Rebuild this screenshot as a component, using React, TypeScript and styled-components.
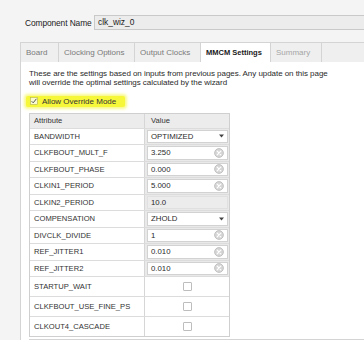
import React from 'react';
import styled, { createGlobalStyle } from 'styled-components';

const GlobalStyle = createGlobalStyle`
  html, body {
    margin: 0;
    padding: 0;
    background: #f4f4f4;
  }
  body {
    font-family: 'Liberation Sans', Arial, sans-serif;
    color: #333;
  }
`;

const Page = styled.div`
  width: 364px;
  height: 340px;
  overflow: hidden;
  background: #f4f4f4;
  display: flex;
  flex-direction: column;
`;

const NameRow = styled.div`
  display: flex;
  align-items: center;
  padding: 15px 0 0 25px;
  height: 15px;
`;

const NameLabel = styled.span`
  font-size: 8.4px;
  letter-spacing: -0.1px;
  color: #222;
  width: 69px;
`;

const NameInput = styled.div`
  flex: 1;
  height: 13px;
  border: 1px solid #c9c9c9;
  border-right: none;
  background: #ececec;
  font-size: 8.4px;
  line-height: 13px;
  padding-left: 3px;
  color: #222;
`;

const TabStrip = styled.div`
  display: flex;
  margin: 12px 0 0 20px;
  height: 19px;
  border-top: 1px solid #d4d4d4;
  border-left: 1px solid #d4d4d4;
  background: #efefef;
`;

const Tab = styled.div<{ $active?: boolean; $muted?: boolean; $w: number }>`
  width: ${p => p.$w}px;
  box-sizing: border-box;
  display: flex;
  align-items: center;
  padding-left: 5px;
  font-size: ${p => (p.$active ? '7.5px' : '8px')};
  font-weight: ${p => (p.$active ? 700 : 400)};
  color: ${p => (p.$active ? '#1a1a1a' : p.$muted ? '#a6a6a6' : '#7a7a7a')};
  background: ${p => (p.$active ? '#ffffff' : 'transparent')};
  border-right: 1px solid #d4d4d4;
`;

const Panel = styled.div`
  flex: 1;
  margin-left: 20px;
  background: #ffffff;
  border-left: 1px solid #d4d4d4;
  padding: 7px 0 0 8px;
  display: flex;
  flex-direction: column;
`;

const Intro = styled.p`
  margin: 0;
  font-size: 8px;
  line-height: 9.5px;
  color: #2a2a2a;
  letter-spacing: -0.05px;
  white-space: nowrap;
`;

const Highlight = styled.div`
  margin: 8px 0 0 -3px;
  width: 95px;
  height: 11px;
  display: flex;
  align-items: center;
  gap: 4px;
  padding-left: 4px;
  background: #f7f73a;
  box-shadow: 0 0 3px 2px #f9f98a;
  border-radius: 2px;
  font-size: 8px;
  color: #333;
`;

const Table = styled.div`
  margin-top: 6px;
  width: 199px;
  border: 1px solid #cfcfcf;
  display: flex;
  flex-direction: column;
`;

const Row = styled.div<{ $h: number; $head?: boolean }>`
  display: grid;
  grid-template-columns: 115px 1fr;
  height: ${p => p.$h}px;
  background: ${p => (p.$head ? '#ececec' : '#ffffff')};
  border-top: 1px solid #dcdcdc;
  box-sizing: border-box;
  &:first-child {
    border-top: none;
  }
`;

const NameCell = styled.div`
  display: flex;
  align-items: center;
  padding-left: 4px;
  font-size: 7.6px;
  color: #333;
  border-right: 1px solid #d6d6d6;
`;

const ValueCell = styled.div`
  display: flex;
  align-items: stretch;
  padding: 1px 1px 1px 2px;
  background: #e9e9e9;
  font-size: 7.8px;
`;

const HeadValue = styled.div`
  display: flex;
  align-items: center;
  padding-left: 6px;
  font-size: 7.6px;
  color: #333;
`;

const Field = styled.div<{ $disabled?: boolean }>`
  flex: 1;
  display: flex;
  align-items: center;
  justify-content: space-between;
  padding: 0 3px 0 3px;
  background: ${p => (p.$disabled ? '#ececec' : '#ffffff')};
  border: 1px solid ${p => (p.$disabled ? '#e0e0e0' : '#d2d2d2')};
  color: #2a2a2a;
`;

const BoolCell = styled.div`
  display: flex;
  align-items: center;
  justify-content: center;
`;

const SmallBox = styled.div`
  width: 7px;
  height: 7px;
  border: 1px solid #bdbdbd;
  border-radius: 1px;
  background: #fff;
`;

const Rule = styled.div`
  margin-top: 2px;
  height: 1px;
  background: #d4d4d4;
`;

const ClearIcon = () => (
  <svg width="10" height="10" viewBox="0 0 10 10">
    <circle cx="5" cy="5" r="4.4" fill="#d6d6d6" stroke="#b8b8b8" strokeWidth="0.8" />
    <path d="M3.2 3.2 L6.8 6.8 M6.8 3.2 L3.2 6.8" stroke="#ffffff" strokeWidth="1.2" strokeLinecap="round" />
  </svg>
);

const DropArrow = () => (
  <svg width="5" height="4" viewBox="0 0 5 4">
    <path d="M0 0.5 L5 0.5 L2.5 3.5 Z" fill="#444" />
  </svg>
);

const CheckMark = () => (
  <svg width="8" height="8" viewBox="0 0 8 8">
    <rect x="0.5" y="0.5" width="7" height="7" fill="#fafad0" stroke="#b5b54a" strokeWidth="0.6" />
    <path d="M1.6 4.2 L3.2 5.8 L6.4 1.8" fill="none" stroke="#555" strokeWidth="1" />
  </svg>
);

type Kind = 'text' | 'select' | 'disabled' | 'bool';

const rows: { name: string; value: string; kind: Kind }[] = [
  { name: 'BANDWIDTH', value: 'OPTIMIZED', kind: 'select' },
  { name: 'CLKFBOUT_MULT_F', value: '3.250', kind: 'text' },
  { name: 'CLKFBOUT_PHASE', value: '0.000', kind: 'text' },
  { name: 'CLKIN1_PERIOD', value: '5.000', kind: 'text' },
  { name: 'CLKIN2_PERIOD', value: '10.0', kind: 'disabled' },
  { name: 'COMPENSATION', value: 'ZHOLD', kind: 'select' },
  { name: 'DIVCLK_DIVIDE', value: '1', kind: 'text' },
  { name: 'REF_JITTER1', value: '0.010', kind: 'text' },
  { name: 'REF_JITTER2', value: '0.010', kind: 'text' },
  { name: 'STARTUP_WAIT', value: '', kind: 'bool' },
  { name: 'CLKFBOUT_USE_FINE_PS', value: '', kind: 'bool' },
  { name: 'CLKOUT4_CASCADE', value: '', kind: 'bool' },
];

const tabs = [
  { label: 'Board', w: 38 },
  { label: 'Clocking Options', w: 76 },
  { label: 'Output Clocks', w: 66 },
  { label: 'MMCM Settings', w: 70, active: true },
  { label: 'Summary', w: 51, muted: true },
];

export default function App() {
  return (
    <Page>
      <GlobalStyle />
      <NameRow>
        <NameLabel>Component Name</NameLabel>
        <NameInput>clk_wiz_0</NameInput>
      </NameRow>
      <TabStrip>
        {tabs.map(t => (
          <Tab key={t.label} $w={t.w} $active={t.active} $muted={t.muted}>
            {t.label}
          </Tab>
        ))}
      </TabStrip>
      <Panel>
        <Intro>
          These are the settings based on inputs from previous pages. Any update on this page
          <br />
          will override the optimal settings calculated by the wizard
        </Intro>
        <Highlight>
          <CheckMark />
          Allow Override Mode
        </Highlight>
        <Table>
          <Row $h={14} $head>
            <NameCell>Attribute</NameCell>
            <HeadValue>Value</HeadValue>
          </Row>
          {rows.map(r => (
            <Row key={r.name} $h={r.kind === 'bool' ? 20 : 16.5}>
              <NameCell>{r.name}</NameCell>
              {r.kind === 'bool' ? (
                <BoolCell>
                  <SmallBox />
                </BoolCell>
              ) : (
                <ValueCell>
                  <Field $disabled={r.kind === 'disabled'}>
                    <span>{r.value}</span>
                    {r.kind === 'text' && <ClearIcon />}
                    {r.kind === 'select' && <DropArrow />}
                  </Field>
                </ValueCell>
              )}
            </Row>
          ))}
        </Table>
        <Rule />
      </Panel>
    </Page>
  );
}
